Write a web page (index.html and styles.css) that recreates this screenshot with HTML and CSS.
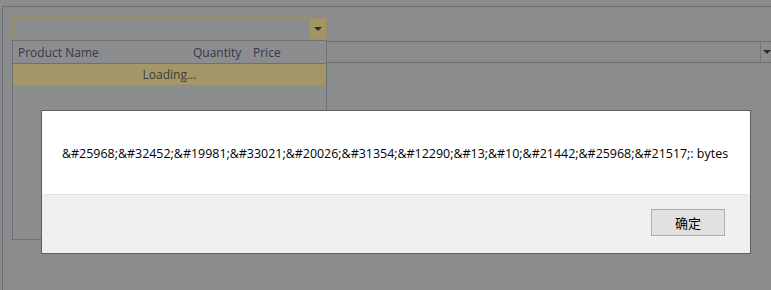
FILE: index.html
```html
<!DOCTYPE html>
<html>
<head>
<meta charset="utf-8">
<title>Product lookup</title>
<link rel="stylesheet" href="styles.css">
</head>
<body>
<div class="frame">
  <div class="combo">
    <div class="combo-input"></div>
    <div class="combo-btn"><span class="caret"></span></div>
  </div>
  <div class="grid">
    <div class="grid-head">
      <div class="grid-fill"></div>
      <div class="grid-btn"><span class="caret"></span></div>
    </div>
  </div>
  <!-- popup list of the combo -->
  <div class="dropdown">
    <div class="dd-head">
      <span class="col-name">Product Name</span>
      <span class="col-qty">Quantity</span>
      <span class="col-price">Price</span>
    </div>
    <div class="dd-loading">Loading...</div>
  </div>
</div>
<div class="dialog">
  <div class="dialog-body">&amp;#25968;&amp;#32452;&amp;#19981;&amp;#33021;&amp;#20026;&amp;#31354;&amp;#12290;&amp;#13;&amp;#10;&amp;#21442;&amp;#25968;&amp;#21517;: bytes</div>
  <div class="dialog-foot">
    <button class="btn">确定</button>
  </div>
</div>
</body>
</html>
```

FILE: styles.css
```css
html, body {
	margin: 0;
	height: 100%;
	overflow: hidden;
}
body {
	background: #8b8c8e;
	font-family: "Open Sans", "Noto Sans CJK SC", sans-serif;
	position: relative;
}
.frame {
	position: relative;
	margin: 6px 0 0 2px;
	height: calc(100% - 6px);
	box-sizing: border-box;
	border-top: 1px solid #6d6e71;
	border-left: 1px solid #6d6e71;
	padding: 11px 0 0 9px;
}
.combo {
	display: flex;
	width: 315px;
	height: 22px;
	box-sizing: border-box;
	border: 1px solid #9e9058;
	border-radius: 2px;
}
.combo-input {
	flex: 1;
}
.combo-btn {
	width: 16px;
	background: #a29666;
	border-left: 1px solid #9e9058;
	display: flex;
	align-items: center;
	justify-content: center;
}
.caret {
	width: 0;
	height: 0;
	border-left: 4px solid transparent;
	border-right: 4px solid transparent;
	border-top: 4px solid #2f2f30;
}
.grid {
	margin-top: 1px;
	width: 768px;
}
.grid-head {
	display: flex;
	height: 22px;
	box-sizing: border-box;
	border-top: 1px solid #6d6e71;
	border-bottom: 1px solid #6d6e71;
}
.grid-fill {
	flex: 1;
}
.grid-btn {
	width: 17px;
	border-left: 1px solid #75767a;
	display: flex;
	align-items: center;
	padding-left: 2px;
}
.dropdown {
	position: absolute;
	left: 9px;
	top: 33px;
	width: 315px;
	height: 200px;
	box-sizing: border-box;
	border: 1px solid #6f7073;
	background: #8c8d8f;
	font-size: 12px;
	color: #37374a;
}
.dd-head {
	display: flex;
	align-items: center;
	height: 22px;
	border-bottom: 1px solid #6f7073;
	padding-left: 5px;
}
.col-name {
	width: 175px;
}
.col-qty {
	width: 60px;
}
.dd-loading {
	height: 21px;
	line-height: 21px;
	text-align: center;
	background: #a39767;
	color: #3a3a3c;
}
.dialog {
	position: absolute;
	left: 41px;
	top: 110px;
	width: 710px;
	height: 144px;
	box-sizing: border-box;
	border: 1px solid #5f6063;
	background: #fff;
	display: flex;
	flex-direction: column;
}
.dialog-body {
	height: 83px;
	box-sizing: border-box;
	padding: 34px 0 0 20px;
	font-size: 12.45px;
	color: #000;
	white-space: nowrap;
}
.dialog-foot {
	flex: 1;
	background: #f0f0f0;
	border-top: 1px solid #e3e3e3;
	display: flex;
	justify-content: flex-end;
	align-items: flex-start;
	padding: 14px 25px 0 0;
}
.btn {
	width: 74px;
	height: 27px;
	background: #e1e1e1;
	border: 1px solid #adadad;
	font-family: "Noto Sans CJK SC", sans-serif;
	font-size: 13px;
	color: #000;
	padding: 0;
}
```
